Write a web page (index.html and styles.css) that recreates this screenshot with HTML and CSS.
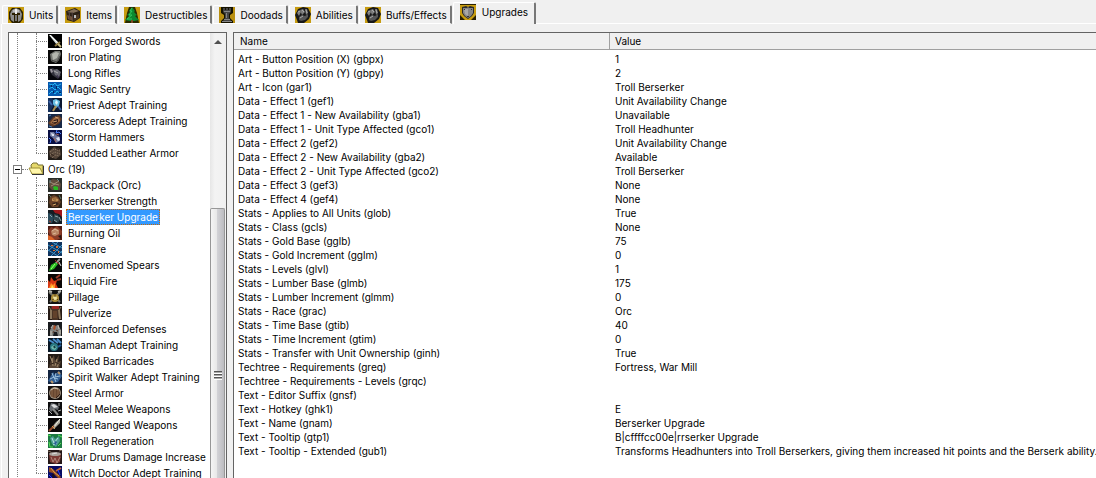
FILE: index.html
```html
<!DOCTYPE html>
<html lang="en">
<head>
    <meta charset="UTF-8">
    <meta name="viewport" content="width=device-width, initial-scale=1.0">
    <title>Object Editor</title>
    <link rel="stylesheet" href="styles.css">
</head>
<body>

    <!-- Icon shapes -->
    <svg class="sprites" aria-hidden="true">
        <symbol id="t-units" viewBox="0 0 16 16"><rect width="16" height="16" fill="#c79c10"/><path d="M4 1h8l3 4v7l-3 4H4l-3-4V5z" fill="#2a2000"/><path d="M4 3l4-2 4 2 2 4-1 6-3 2V8h2V6H4v2h2v7l-3-2-1-6z" fill="#8c8c8c"/><path d="M5 3l3-1 3 1v2H5z" fill="#bbb"/><path d="M7 2h2v5H7z" fill="#eee"/><path d="M7 8h2v6H7z" fill="#777"/></symbol>
        <symbol id="t-items" viewBox="0 0 16 16"><rect width="16" height="16" fill="#c79c10"/><path d="M1 4l9-3 5 3v7l-6 4-7-2z" fill="#2b2115"/><path d="M2 5l7-3 5 2-6 2z" fill="#84705a"/><path d="M2 8l6 2v4l-5-2z" fill="#74543a"/><path d="M9 9l5-2v4l-5 3z" fill="#4d3825"/><path d="M4 4l1 9M7 5l1 9" stroke="#544"/><path d="M9 8h2v3H9z" fill="#bbb"/></symbol>
        <symbol id="t-tree" viewBox="0 0 16 16"><rect width="16" height="16" fill="#c79c10"/><path d="M5 0h6l2 6 2 10H1L3 6z" fill="#2a2a00"/><path d="M8 0l3 4-1 1 3 3-2 1 4 4-5 1H6l-5-1 4-4-2-1 3-3-1-1z" fill="#0b8a30"/><path d="M8 1L6 4h2L5 8h3l-5 4h5" stroke="#30c65c" fill="none"/><path d="M7 13h2v3H7z" fill="#7b4a22"/></symbol>
        <symbol id="t-rook" viewBox="0 0 16 16"><rect width="16" height="16" fill="#b98f10"/><path d="M2 0h12v6l-3 2v3l3 3v2H2v-2l3-3V8L2 6z" fill="#151200"/><path d="M4 1h2v2h1V1h2v2h1V1h2v4l-2 2v4l2 3H4l2-3V7L4 5z" fill="#444"/><path d="M5 4h6v1H5zM7 6h1v5H7zM5 12h6v1H5zM3 14h10v1H3z" fill="#858585"/></symbol>
        <symbol id="t-fist" viewBox="0 0 16 16"><rect width="16" height="16" fill="#c79c10"/><path d="M0 8l3-6 5-2 5 1 3 6-2 5-5 4H3l-1-3z" fill="#171717"/><path d="M2 6l2-3 2 2-2 4zM5 3l3-1 2 3-3 3zM10 2h2l1 4-2 2z" fill="#7c7c7c"/><path d="M4 10l3-2 3 1 3-2v3l-3 3-4 1-2-1z" fill="#555"/><path d="M5 11l3-2M3 5l2-1M7 3l2 2M11 3l1 3" stroke="#aaa"/></symbol>
        <symbol id="t-shield" viewBox="0 0 16 16"><rect width="16" height="16" fill="#c79c10"/><path d="M0 0h16v1H0zM0 11l5 5H0zM16 11l-5 5h5z" fill="#2a2000"/><path d="M2 3l4-1 2 1 2-1 4 1v6l-2 3-4 3-4-3-2-3z" fill="#2a2a2a"/><path d="M3 4h4l1-1 1 1h4v5l-2 3-3 2-3-2-2-3z" fill="#858585"/><path d="M4 5h4v7l-3-2z" fill="#a8a8a8"/><path d="M4 5h1v1H4zM11 5h1v1h-1zM7 12h2v1H7z" fill="#333"/></symbol>

        <symbol id="i-sword" viewBox="0 0 14 14"><rect width="14" height="14"/><path d="M1 1l2 0 8 8-2 2z" fill="#d9e2df"/><path d="M2 1l8 8" stroke="#fff"/><path d="M7 12l5-4" stroke="#8f7a40" stroke-width="2"/><path d="M10 10l3 3" stroke="#c9bb83" stroke-width="2"/></symbol>
        <symbol id="i-plate" viewBox="0 0 14 14"><rect width="14" height="14" fill="#080808"/><path d="M2 4l5-3 5 0 1 3-2 6-3 3-5-2z" fill="#777974"/><path d="M4 4l4-2 3 1-2 5-4 2z" fill="#b4b6ae"/><path d="M3 10l6 2 3-6" stroke="#444" fill="none"/></symbol>
        <symbol id="i-rifle" viewBox="0 0 14 14"><rect width="14" height="14" fill="#06060b"/><path d="M1 3l4-1 8 7-3 4-6-4z" fill="#30303a"/><path d="M5 4l4-1 4 3-2 5-4-2z" fill="#686872"/><path d="M2 3l2 0 1 3-2 1z" fill="#99949c"/><path d="M6 5l4 2" stroke="#aaa"/><path d="M9 9l2 3" stroke="#403052"/></symbol>
        <symbol id="i-sentry" viewBox="0 0 14 14"><rect width="14" height="14" fill="#0758ad"/><path d="M1 2l4 1 2-2 2 3 4-2M1 7l3-2 3 3 3-3 3 3M1 12l3-3 3 3 2-3 4 3" stroke="#25b8f4" fill="none"/><path d="M3 3v2h1V3zM8 4v3h1V4zM5 9v2h1V9zM11 10h2v1h-2z" fill="#05255f"/></symbol>
        <symbol id="i-priest" viewBox="0 0 14 14"><rect width="14" height="14" fill="#0a1630"/><path d="M0 0h4l3 5-5 9H0z" fill="#14305c"/><path d="M5 2l3-1 4 2-1 5-3 2-3-4z" fill="#65bde2"/><path d="M8 2l2 2-1 3-2-2z" fill="#e2f7ff"/><path d="M8 8l-3 5" stroke="#a78e54" stroke-width="2"/><path d="M10 8l3 4M1 3l3 4" stroke="#3962a8" stroke-width="2"/></symbol>
        <symbol id="i-sorc" viewBox="0 0 14 14"><rect width="14" height="14" fill="#182846"/><path d="M0 9l5-6 6-2 3 4-3 5-7 3z" fill="#603b26"/><path d="M2 9l4-5 5-1 1 4-5 4z" fill="#a06a42"/><path d="M4 9l2-3 4-1 0 3-3 2z" fill="#351d17"/><path d="M5 8l4-1M7 3l3 1" stroke="#d1a172"/><path d="M1 2l2-1M1 12l3 1" stroke="#4e82bd"/></symbol>
        <symbol id="i-storm" viewBox="0 0 14 14"><rect width="14" height="14" fill="#080e42"/><path d="M2 2l4 0 2 3 4 2 0 4-4 2-3-5-3-2z" fill="#6f789e"/><path d="M3 3l3 1 0 2-2 0zM8 8l3-1 1 3-2 1z" fill="#dbe2f2"/><path d="M9 0l-1 3 3-1 2 2M1 8l2 2-1 3" stroke="#4d82ff" fill="none"/><path d="M6 8l2 4M8 4l3 1" stroke="#a26454"/></symbol>
        <symbol id="i-leather" viewBox="0 0 14 14"><rect width="14" height="14" fill="#211c18"/><path d="M1 5l5-4 6 2 1 6-5 4-6-2z" fill="#544438"/><path d="M2 6l4-3 6 2M2 9l5-3 5 2M4 12l3-3 4 1" stroke="#95816b" fill="none" stroke-dasharray="1 1"/><path d="M8 2l3 2M3 8l3 2" stroke="#302219"/></symbol>
        <symbol id="i-folder" viewBox="0 0 16 14"><path d="M3 3l2-2h4l1 2h5v9H4z" fill="#e5d86b" stroke="#797032"/><path d="M1 6h11l3 6H4z" fill="#fff6a9" stroke="#9c8e37"/><path d="M15 4h1v9H4v-1h11z" fill="#333"/></symbol>
        <symbol id="i-pack" viewBox="0 0 14 14"><rect width="14" height="14" fill="#292d29"/><path d="M1 3l4-2 5 1 3 4-1 6H4L1 9z" fill="#604c3d"/><path d="M2 4l4 2 5-3M3 8l4-2 4 1" stroke="#9f8c74" fill="none"/><path d="M9 1l2 2M2 2v3" stroke="#668c93"/><path d="M5 9l2-1 3 1v3H6z" fill="#27ba22"/></symbol>
        <symbol id="i-strength" viewBox="0 0 14 14"><rect width="14" height="14" fill="#2b2116"/><path d="M2 3l4-2 4 2 3 5-3 5H4L1 9z" fill="#694228"/><path d="M4 4l4-1 3 3-2 2-5-1z" fill="#a0703f"/><path d="M4 9l5-1 2 2-4 2zM5 5h1v1H5z" fill="#38251b"/><path d="M4 6h2M8 6h2M5 11l3-1" stroke="#dcae6a"/><path d="M1 1l2 2M11 1l2 4" stroke="#56766a"/></symbol>
        <symbol id="i-zerk" viewBox="0 0 14 14"><rect width="14" height="14" fill="#141b22"/><path d="M5 0h9v7l-3-3-4-1z" fill="#a0161a"/><path d="M0 3l4 1 2 4-2 5H0z" fill="#294959"/><path d="M6 4l4 1 2 4-2 4-4-2z" fill="#31464d"/><path d="M2 5l2 2M7 6l3 1M11 7l2 4M6 10l3 2" stroke="#8ea3a8"/><path d="M1 11l2 1" stroke="#b13524"/></symbol>
        <symbol id="i-oil" viewBox="0 0 14 14"><rect width="14" height="14" fill="#4f1b12"/><path d="M0 5l3-4 3 1 3-2 5 5-1 7-4 2H4z" fill="#8b3c28"/><path d="M3 5l4-3 4 2 0 4-4 2-3-1z" fill="#b98563"/><path d="M4 5l3-2 3 2M5 8l3-1" stroke="#dcb596" fill="none"/><path d="M0 9l4 2 3 3H0z" fill="#dc6427"/><path d="M10 10l3-1v4z" fill="#281815"/></symbol>
        <symbol id="i-net" viewBox="0 0 14 14"><rect width="14" height="14" fill="#10345e"/><path d="M0 3l14 8M0 8l10 6M4 0l10 6M10 0L0 9M14 3L3 14M14 9l-5 5" stroke="#3c91c4"/><path d="M3 3h2v1H3zM8 4h2v2H8zM5 8h2v1H5zM10 9h1v2h-1z" fill="#dd7333"/></symbol>
        <symbol id="i-spear" viewBox="0 0 14 14"><rect width="14" height="14" fill="#080b0a"/><path d="M1 13l2-6 5-3 2 2-4 5z" fill="#27bc20"/><path d="M3 11l4-5" stroke="#a4ff79"/><path d="M8 5l4-4" stroke="#9a9996" stroke-width="2"/><path d="M7 2l5 5" stroke="#a52b22"/><path d="M11 4l2 4" stroke="#ddd"/></symbol>
        <symbol id="i-fire" viewBox="0 0 14 14"><rect width="14" height="14" fill="#0b0605"/><path d="M0 14V6l2 2 1-5 3 4 3-1-1 4 2 4z" fill="#d83814"/><path d="M1 14l2-5 2 2 2-2v5z" fill="#ff8b24"/><path d="M3 14l1-3 2 3z" fill="#ffe15e"/><path d="M8 4l4-3M9 6l4-1" stroke="#973929" stroke-width="2"/></symbol>
        <symbol id="i-pillage" viewBox="0 0 14 14"><rect width="14" height="14" fill="#111"/><path d="M1 2l11 10M12 2L2 12" stroke="#74746b" stroke-width="2"/><path d="M1 1l3 1M10 2l3-1" stroke="#b7b7b0" stroke-width="2"/><circle cx="7" cy="8" r="4" fill="#ad8f39"/><circle cx="7" cy="8" r="2" fill="#ede2a0"/><path d="M7 4v3M4 10l2-1M10 10L9 9" stroke="#5d4516"/></symbol>
        <symbol id="i-pulverize" viewBox="0 0 14 14"><rect width="14" height="14" fill="#241914"/><path d="M3 0h8l1 5-2 9H4L2 5z" fill="#4a3425"/><path d="M4 0h7v3H4z" fill="#972623"/><path d="M3 4v9M11 4l1 9" stroke="#8a765b" stroke-width="2"/><path d="M6 5v7M8 5v7" stroke="#7b5033"/><path d="M1 1l2 3M13 1l-2 3" stroke="#88765d"/></symbol>
        <symbol id="i-defense" viewBox="0 0 14 14"><rect width="14" height="14" fill="#191b1d"/><path d="M2 14V8l3-5 2 1 3-1 3 5v6h-3l-1-4H6l-1 4z" fill="#81827f"/><path d="M3 6l2-3M10 3l1 4M3 9v4M12 8v4" stroke="#c5c1b5"/><path d="M6 3l2 1-1 4-2-1z" fill="#aa4e26"/><path d="M8 8l2 1M6 9l-1 2" stroke="#5b3828"/></symbol>
        <symbol id="i-shaman" viewBox="0 0 14 14"><rect width="14" height="14" fill="#071725"/><path d="M1 2l5 3M5 1l5 4M9 1l4 4" stroke="#4a8cc9" stroke-width="2"/><circle cx="6" cy="9" r="4" fill="#287783"/><path d="M3 9l3-2 3 2-2 3-3-1z" fill="#70b8ae"/><path d="M6 8l1 2" stroke="#103b41" stroke-width="2"/><path d="M10 9l3-2" stroke="#285e9b" stroke-width="2"/></symbol>
        <symbol id="i-spiked" viewBox="0 0 14 14"><rect width="14" height="14" fill="#231b16"/><path d="M1 14l2-8 3-5 1 6 4-6-1 7 3-1-2 7z" fill="#5a4636"/><path d="M4 4l1 8M9 5l-2 7M11 9l-2 4M2 2l2 5" stroke="#a18a6a"/><path d="M0 11l6-2M7 8l6 3" stroke="#33251b"/></symbol>
        <symbol id="i-spirit" viewBox="0 0 14 14"><rect width="14" height="14" fill="#122440"/><path d="M0 11l5-9 2 3 4-4 3 5-4 6-5 1z" fill="#315e92"/><path d="M4 3l2 5 4 1M2 9l4-2 2 5M8 3l-1 4 5-1" stroke="#9ec3df" fill="none"/><path d="M10 2l2 2M3 11l2 2" stroke="#b99668" stroke-width="2"/></symbol>
        <symbol id="i-armor" viewBox="0 0 14 14"><rect width="14" height="14" fill="#15100e"/><circle cx="7" cy="7" r="6" fill="#9b8e7e"/><circle cx="7" cy="7" r="5" fill="#674630"/><path d="M4 3v8M7 2v10M10 3v8" stroke="#8b6749"/><path d="M3 4l3-2 4 1" stroke="#d0c2ad" fill="none"/><path d="M8 12l4-4" stroke="#332019"/></symbol>
        <symbol id="i-melee" viewBox="0 0 14 14"><rect width="14" height="14" fill="#0c0c0d"/><path d="M3 1l5 1 3 3-1 3-4-1-3 3-2-3z" fill="#676b70"/><path d="M3 3l3-1 4 3-4 1z" fill="#ddd"/><path d="M5 7l5 6" stroke="#8a8a88" stroke-width="2"/><path d="M10 9l3-1M1 9l3 3M11 1v3" stroke="#b4b4b4"/></symbol>
        <symbol id="i-ranged" viewBox="0 0 14 14"><rect width="14" height="14" fill="#0a0808"/><path d="M12 1l0 4-6 6-2-2 4-5z" fill="#a8a598"/><path d="M12 1L6 9" stroke="#f0efe5"/><path d="M6 8l-5 5" stroke="#92492b" stroke-width="2"/><path d="M4 8l3 3" stroke="#cda255"/></symbol>
        <symbol id="i-regen" viewBox="0 0 14 14"><rect width="14" height="14" fill="#1c7a42"/><path d="M2 4l3-2 2 3 4-3 1 5-4 6-4-3z" fill="#4d9f95"/><path d="M4 4l2 5 4-5M5 11l4-2" stroke="#bce4e2" fill="none"/><path d="M0 1l3 1M10 1l4 2M1 8l1 5 3 0M10 12l3-3" stroke="#56df54" fill="none"/><path d="M7 7l2 1-1 3-2-1z" fill="#2b5f96"/></symbol>
        <symbol id="i-drums" viewBox="0 0 14 14"><rect width="14" height="14" fill="#211515"/><path d="M1 5l12-1-1 8-4 2-6-2z" fill="#7c3a34"/><ellipse cx="7" cy="4" rx="6" ry="2" fill="#a9a19a"/><path d="M4 4l5-1" stroke="#ddd"/><path d="M3 7l2 5 2-4 2 5 3-6" stroke="#b08678" fill="none"/><path d="M0 1l3 1M11 1l3-1" stroke="#765"/></symbol>
        <symbol id="i-witch" viewBox="0 0 14 14"><rect width="14" height="14" fill="#070b62"/><path d="M1 1l4 2 8 8-2 2-6-6-4-1z" fill="#964c20"/><path d="M3 2l3 4 5 4" stroke="#dba04d" fill="none"/><path d="M8 5l5-3" stroke="#c16634" stroke-width="2"/><path d="M1 9l3 3M10 4l2 5" stroke="#293cff"/><path d="M5 8l1 5" stroke="#1c0b13" stroke-width="2"/></symbol>
    </svg>

    <!-- Tabs -->
    <div class="tabs" role="tablist">
        <button class="tab" role="tab"><svg><use href="#t-units"/></svg>Units</button>
        <button class="tab" role="tab"><svg><use href="#t-items"/></svg>Items</button>
        <button class="tab" role="tab"><svg><use href="#t-tree"/></svg>Destructibles</button>
        <button class="tab" role="tab"><svg><use href="#t-rook"/></svg>Doodads</button>
        <button class="tab" role="tab"><svg><use href="#t-fist"/></svg>Abilities</button>
        <button class="tab" role="tab"><svg><use href="#t-fist"/></svg>Buffs/Effects</button>
        <button class="tab active" role="tab" aria-selected="true"><svg><use href="#t-shield"/></svg>Upgrades</button>
        <div class="tab-line"></div>
    </div>

    <div class="container">

        <!-- Upgrade tree -->
        <div class="tree-box">
            <div class="tree">
                <ul class="branch">
                    <li><svg><use href="#i-sword"/></svg><span>Iron Forged Swords</span></li>
                    <li><svg><use href="#i-plate"/></svg><span>Iron Plating</span></li>
                    <li><svg><use href="#i-rifle"/></svg><span>Long Rifles</span></li>
                    <li><svg><use href="#i-sentry"/></svg><span>Magic Sentry</span></li>
                    <li><svg><use href="#i-priest"/></svg><span>Priest Adept Training</span></li>
                    <li><svg><use href="#i-sorc"/></svg><span>Sorceress Adept Training</span></li>
                    <li><svg><use href="#i-storm"/></svg><span>Storm Hammers</span></li>
                    <li><svg><use href="#i-leather"/></svg><span>Studded Leather Armor</span></li>
                </ul>
                <div class="group">
                    <button class="toggle" aria-label="Collapse Orc"></button>
                    <div class="stub"></div>
                    <svg class="folder"><use href="#i-folder"/></svg>
                    <span>Orc (19)</span>
                </div>
                <ul class="branch">
                    <li><svg><use href="#i-pack"/></svg><span>Backpack (Orc)</span></li>
                    <li><svg><use href="#i-strength"/></svg><span>Berserker Strength</span></li>
                    <li><svg><use href="#i-zerk"/></svg><span class="selected">Berserker Upgrade</span></li>
                    <li><svg><use href="#i-oil"/></svg><span>Burning Oil</span></li>
                    <li><svg><use href="#i-net"/></svg><span>Ensnare</span></li>
                    <li><svg><use href="#i-spear"/></svg><span>Envenomed Spears</span></li>
                    <li><svg><use href="#i-fire"/></svg><span>Liquid Fire</span></li>
                    <li><svg><use href="#i-pillage"/></svg><span>Pillage</span></li>
                    <li><svg><use href="#i-pulverize"/></svg><span>Pulverize</span></li>
                    <li><svg><use href="#i-defense"/></svg><span>Reinforced Defenses</span></li>
                    <li><svg><use href="#i-shaman"/></svg><span>Shaman Adept Training</span></li>
                    <li><svg><use href="#i-spiked"/></svg><span>Spiked Barricades</span></li>
                    <li><svg><use href="#i-spirit"/></svg><span>Spirit Walker Adept Training</span></li>
                    <li><svg><use href="#i-armor"/></svg><span>Steel Armor</span></li>
                    <li><svg><use href="#i-melee"/></svg><span>Steel Melee Weapons</span></li>
                    <li><svg><use href="#i-ranged"/></svg><span>Steel Ranged Weapons</span></li>
                    <li><svg><use href="#i-regen"/></svg><span>Troll Regeneration</span></li>
                    <li><svg><use href="#i-drums"/></svg><span>War Drums Damage Increase</span></li>
                    <li><svg><use href="#i-witch"/></svg><span>Witch Doctor Adept Training</span></li>
                </ul>
            </div>
            <div class="scrollbar">
                <button class="scroll-up" aria-label="Scroll up"></button>
                <div class="thumb"><div class="grip"></div></div>
            </div>
        </div>

        <!-- Field list -->
        <div class="field-box">
            <table>
                <thead>
                    <tr><th class="name-col">Name</th><th>Value</th></tr>
                </thead>
                <tbody>
                    <tr><td>Art - Button Position (X) (gbpx)</td><td>1</td></tr>
                    <tr><td>Art - Button Position (Y) (gbpy)</td><td>2</td></tr>
                    <tr><td>Art - Icon (gar1)</td><td>Troll Berserker</td></tr>
                    <tr><td>Data - Effect 1 (gef1)</td><td>Unit Availability Change</td></tr>
                    <tr><td>Data - Effect 1 - New Availability (gba1)</td><td>Unavailable</td></tr>
                    <tr><td>Data - Effect 1 - Unit Type Affected (gco1)</td><td>Troll Headhunter</td></tr>
                    <tr><td>Data - Effect 2 (gef2)</td><td>Unit Availability Change</td></tr>
                    <tr><td>Data - Effect 2 - New Availability (gba2)</td><td>Available</td></tr>
                    <tr><td>Data - Effect 2 - Unit Type Affected (gco2)</td><td>Troll Berserker</td></tr>
                    <tr><td>Data - Effect 3 (gef3)</td><td>None</td></tr>
                    <tr><td>Data - Effect 4 (gef4)</td><td>None</td></tr>
                    <tr><td>Stats - Applies to All Units (glob)</td><td>True</td></tr>
                    <tr><td>Stats - Class (gcls)</td><td>None</td></tr>
                    <tr><td>Stats - Gold Base (gglb)</td><td>75</td></tr>
                    <tr><td>Stats - Gold Increment (gglm)</td><td>0</td></tr>
                    <tr><td>Stats - Levels (glvl)</td><td>1</td></tr>
                    <tr><td>Stats - Lumber Base (glmb)</td><td>175</td></tr>
                    <tr><td>Stats - Lumber Increment (glmm)</td><td>0</td></tr>
                    <tr><td>Stats - Race (grac)</td><td>Orc</td></tr>
                    <tr><td>Stats - Time Base (gtib)</td><td>40</td></tr>
                    <tr><td>Stats - Time Increment (gtim)</td><td>0</td></tr>
                    <tr><td>Stats - Transfer with Unit Ownership (ginh)</td><td>True</td></tr>
                    <tr><td>Techtree - Requirements (greq)</td><td>Fortress, War Mill</td></tr>
                    <tr><td>Techtree - Requirements - Levels (grqc)</td><td></td></tr>
                    <tr><td>Text - Editor Suffix (gnsf)</td><td></td></tr>
                    <tr><td>Text - Hotkey (ghk1)</td><td>E</td></tr>
                    <tr><td>Text - Name (gnam)</td><td>Berserker Upgrade</td></tr>
                    <tr><td>Text - Tooltip (gtp1)</td><td>B|cffffcc00e|rrserker Upgrade</td></tr>
                    <tr><td>Text - Tooltip - Extended (gub1)</td><td>Transforms Headhunters into Troll Berserkers, giving them increased hit points and the Berserk ability.</td></tr>
                </tbody>
            </table>
        </div>
    </div>

</body>
</html>
```

FILE: styles.css
```css
* {
    margin: 0;
    padding: 0;
    box-sizing: border-box;
}

body {
    background: #f0f0f0;
    color: #000;
    font-family: Inter, Arial, sans-serif;
    font-size: 10px;
    height: 100vh;
    display: flex;
    flex-direction: column;
    overflow: hidden;
}

button {
    font: inherit;
    color: inherit;
    border: none;
    background: none;
}

svg {
    flex: none;
}

.sprites {
    display: none;
}

/* Tabs */
.tabs {
    display: flex;
    align-items: flex-end;
    height: 24px;
    flex: none;
    padding-left: 2px;
}

.tab {
    display: flex;
    align-items: center;
    gap: 5px;
    height: 19px;
    padding: 0 3px 0 5px;
    margin-right: 1px;
    border-top: 1px solid #fff;
    border-left: 1px solid #fff;
    border-right: 2px solid #777;
    border-bottom: 1px solid #fff;
    border-radius: 2px 2px 0 0;
    white-space: nowrap;
}

.tab svg {
    width: 16px;
    height: 16px;
}

.tab.active {
    height: 22px;
    gap: 6px;
    padding: 0 6px 3px;
    margin-right: 0;
    border-bottom: none;
}

.tab-line {
    flex: 1;
    border-bottom: 1px solid #fff;
}

.container {
    display: flex;
    flex: 1;
    gap: 6px;
    min-height: 0;
    margin-left: 1px;
    padding: 8px 0 0 6px;
    border-left: 1px solid #fff;
}

/* Tree */
.tree-box {
    display: flex;
    flex: none;
    width: 219px;
    background: #fff;
    border: 1px solid #646464;
    border-bottom: none;
    overflow: hidden;
}

.tree {
    flex: 1;
    min-width: 0;
    padding-left: 8px;
    white-space: nowrap;
}

.branch {
    list-style: none;
    padding-left: 18px;
    border-left: 1px dotted #808080;
}

.branch li,
.group {
    display: flex;
    align-items: center;
    height: 16px;
}

/* dotted connectors: trunk on the left, stub towards the icon */
.branch li {
    position: relative;
    padding-left: 12px;
    gap: 4px;
}

.branch li::before {
    content: "";
    position: absolute;
    left: 0;
    top: 0;
    height: 16px;
    border-left: 1px dotted #808080;
}

.branch li:last-child::before {
    height: 8px;
}

.branch li::after {
    content: "";
    position: absolute;
    left: 0;
    top: 8px;
    width: 11px;
    border-top: 1px dotted #808080;
}

.branch svg {
    width: 14px;
    height: 14px;
}

.branch span {
    height: 16px;
    line-height: 16px;
    padding: 0 2px;
}

.branch .selected {
    background: #3399ff;
    color: #fff;
    outline: 1px dotted #cc6600;
    outline-offset: -1px;
}

.group {
    margin-left: -5px;
}

.toggle {
    display: flex;
    align-items: center;
    justify-content: center;
    width: 9px;
    height: 9px;
    margin-left: 1px;
    border: 1px solid #808080;
    background: #fff;
}

.toggle::before {
    content: "";
    width: 5px;
    height: 1px;
    background: #000;
}

.stub {
    width: 6px;
    border-top: 1px dotted #808080;
}

.folder {
    width: 16px;
    height: 14px;
    margin-right: 4px;
}

/* Scrollbar */
.scrollbar {
    display: flex;
    flex-direction: column;
    flex: none;
    width: 16px;
    background: linear-gradient(to right, #e6e6e6, #f3f3f3 30%, #f0f0f0);
}

.scroll-up {
    display: flex;
    align-items: center;
    justify-content: center;
    height: 17px;
}

.scroll-up::before {
    content: "";
    border: 4px solid transparent;
    border-top: none;
    border-bottom: 4px solid #505050;
}

.thumb {
    display: flex;
    justify-content: center;
    flex: 1;
    margin: 158px 1px 0 0;
    padding-top: 162px;
    border: 1px solid #979797;
    border-bottom: none;
    border-radius: 2px 2px 0 0;
    background: linear-gradient(to right, #f5f5f5, #e8e8e8 45%, #d2d2d6 50%, #bcbcc0);
}

.grip {
    width: 8px;
    height: 9px;
    background: repeating-linear-gradient(#555 0 1px, #aaa 1px 2px, #fff 2px 3px);
}

/* Field list */
.field-box {
    flex: 1;
    min-width: 0;
    background: #fff;
    border-top: 1px solid #646464;
    border-left: 1px solid #646464;
    overflow: hidden;
}

table {
    width: 100%;
    table-layout: fixed;
    border-collapse: separate;
    border-spacing: 0;
}

th {
    height: 17px;
    padding: 0 6px;
    background: #f0f0f0;
    border-bottom: 1px solid #a0a0a0;
    font-weight: normal;
    text-align: left;
}

.name-col {
    width: 376px;
    border-right: 1px solid #a0a0a0;
}

td {
    height: 14px;
    padding: 0 4px;
    line-height: 14px;
    white-space: nowrap;
}

th + th,
td + td {
    padding: 0 0 0 5px;
}

tbody::before {
    content: "";
    display: block;
    height: 2px;
}
```
